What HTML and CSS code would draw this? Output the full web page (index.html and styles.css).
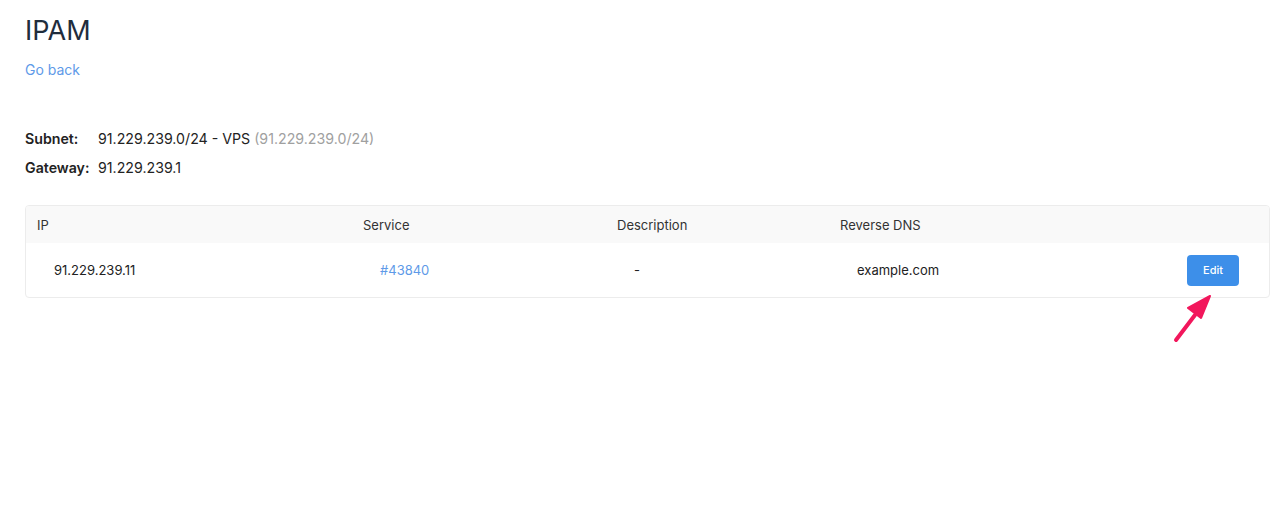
FILE: index.html
```html
<html>
  <head>
    <title>IPAM</title>
    <link rel="stylesheet" href="styles.css">
  </head>
  <body>
  <div class="page">
    <h1 class="title">IPAM</h1>
    <a class="back" href="#">Go back</a>

    <div class="info">
      <div class="infoRow"><span class="infoLabel">Subnet:</span><span class="infoValue">91.229.239.0/24 - VPS <span class="muted">(91.229.239.0/24)</span></span></div>
      <div class="infoRow"><span class="infoLabel">Gateway:</span><span class="infoValue">91.229.239.1</span></div>
    </div>

    <div class="card">
      <table class="ipTable">
        <thead>
          <tr>
            <th class="colIp">IP</th>
            <th class="colService">Service</th>
            <th class="colDesc">Description</th>
            <th class="colDns">Reverse DNS</th>
            <th class="colAction"></th>
          </tr>
        </thead>
        <tbody>
          <tr>
            <td>91.229.239.11</td>
            <td><a class="link" href="#">#43840</a></td>
            <td>-</td>
            <td>example.com</td>
            <td class="actionCell"><button class="editBtn">Edit</button></td>
          </tr>
        </tbody>
      </table>
    </div>
  </div>

  <svg class="arrow" width="50" height="60" viewBox="0 0 50 60">
    <line x1="8" y1="52" x2="27" y2="27" stroke="#f2175c" stroke-width="4" stroke-linecap="round"/>
    <polygon points="42,8 20,20 33,30" fill="#f2175c" stroke="#f2175c" stroke-width="2" stroke-linejoin="round"/>
  </svg>
  </body>
</html>
```

FILE: styles.css
```css
body{
    margin: 0;
    background-color: #ffffff;
    font-family: "Inter", "Roboto", sans-serif;
    color: #222222;
}
.page{
    padding: 14px 10px 0 25px;
}
.title{
    font-size: 27px;
    font-weight: 400;
    color: #1f2d3d;
    margin: 0;
    line-height: 34px;
}
.back{
    display: inline-block;
    margin-top: 13px;
    font-size: 14px;
    color: #5e9ae8;
    text-decoration: none;
}
.info{
    margin-top: 46px;
    font-size: 14.2px;
}
.infoRow{
    display: flex;
    height: 29px;
    align-items: center;
}
.infoLabel{
    width: 73px;
    font-weight: 600;
    color: #222222;
}
.muted{
    color: #a0a0a0;
}
.card{
    margin-top: 23px;
    border: 1px solid #ececec;
    border-radius: 4px;
    overflow: hidden;
}
.ipTable{
    width: 100%;
    border-collapse: collapse;
    table-layout: fixed;
    font-size: 13px;
}
.ipTable th{
    background-color: #f9f9f9;
    font-weight: 400;
    color: #333333;
    text-align: left;
    height: 37px;
    padding: 0 0 0 11px;
}
.ipTable td{
    height: 54px;
    padding: 0 0 0 28px;
    color: #222222;
}
.colIp{ width: 315px; }
.colService{ width: 243px; }
.colDesc{ width: 212px; }
.colAction{ width: 109px; }
.link{
    color: #5e9ae8;
    text-decoration: none;
}
.actionCell{
    text-align: right;
}
.ipTable td.actionCell{
    padding-right: 30px;
}
.editBtn{
    background-color: #3d8fe9;
    color: #ffffff;
    border: none;
    border-radius: 4px;
    font-family: "Inter", sans-serif;
    font-size: 11px;
    font-weight: 500;
    width: 52px;
    height: 31px;
}
.arrow{
    position: absolute;
    left: 1168px;
    top: 288px;
}
```
